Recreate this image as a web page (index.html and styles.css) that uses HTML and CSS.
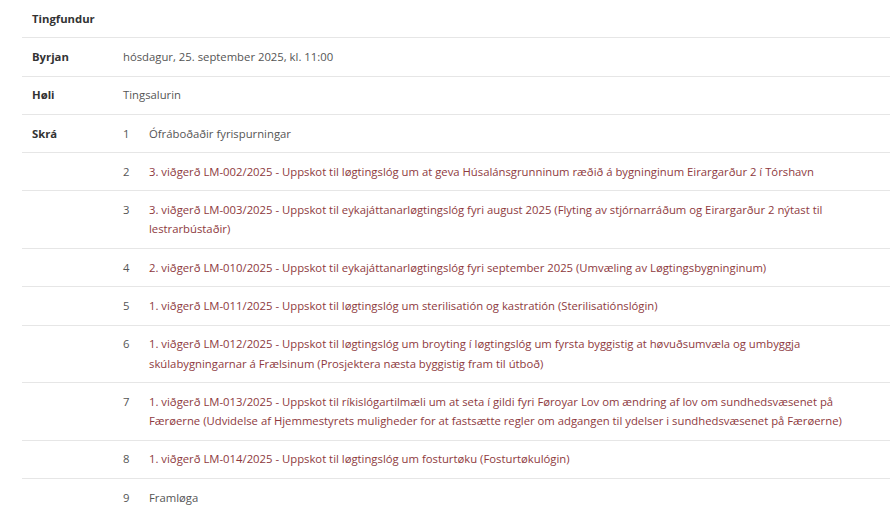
FILE: index.html
```html
<!DOCTYPE html>
<html lang="fo">
<head>
<meta charset="utf-8">
<link rel="stylesheet" href="styles.css">
</head>
<body>
<table class="meeting">
  <tbody>
    <tr class="first">
      <th>Tingfundur</th>
      <td></td>
    </tr>
    <tr>
      <th>Byrjan</th>
      <td>hósdagur, 25. september 2025, kl. 11:00</td>
    </tr>
    <tr>
      <th>Høli</th>
      <td>Tingsalurin</td>
    </tr>
    <tr>
      <th>Skrá</th>
      <td><div class="item"><span class="num">1</span><span class="txt">Ófráboðaðir fyrispurningar</span></div></td>
    </tr>
    <tr>
      <th></th>
      <td><div class="item"><span class="num">2</span><a class="txt link" href="#">3. viðgerð LM-002/2025 - Uppskot til løgtingslóg um at geva Húsalánsgrunninum ræðið á bygninginum Eirargarður 2 í Tórshavn</a></div></td>
    </tr>
    <tr>
      <th></th>
      <td><div class="item"><span class="num">3</span><a class="txt link" href="#">3. viðgerð LM-003/2025 - Uppskot til eykajáttanarløgtingslóg fyri august 2025 (Flyting av stjórnarráðum og Eirargarður 2 nýtast til lestrarbústaðir)</a></div></td>
    </tr>
    <tr>
      <th></th>
      <td><div class="item"><span class="num">4</span><a class="txt link" href="#">2. viðgerð LM-010/2025 - Uppskot til eykajáttanarløgtingslóg fyri september 2025 (Umvæling av Løgtingsbygninginum)</a></div></td>
    </tr>
    <tr>
      <th></th>
      <td><div class="item"><span class="num">5</span><a class="txt link" href="#">1. viðgerð LM-011/2025 - Uppskot til løgtingslóg um sterilisatión og kastratión (Sterilisatiónslógin)</a></div></td>
    </tr>
    <tr>
      <th></th>
      <td><div class="item"><span class="num">6</span><a class="txt link" href="#">1. viðgerð LM-012/2025 - Uppskot til løgtingslóg um broyting í løgtingslóg um fyrsta byggistig at høvuðsumvæla og umbyggja skúlabygningarnar á Frælsinum (Prosjektera næsta byggistig fram til útboð)</a></div></td>
    </tr>
    <tr>
      <th></th>
      <td><div class="item"><span class="num">7</span><a class="txt link" href="#">1. viðgerð LM-013/2025 - Uppskot til ríkislógartilmæli um at seta í gildi fyri Føroyar Lov om ændring af lov om sundhedsvæsenet på Færøerne (Udvidelse af Hjemmestyrets muligheder for at fastsætte regler om adgangen til ydelser i sundhedsvæsenet på Færøerne)</a></div></td>
    </tr>
    <tr>
      <th></th>
      <td><div class="item"><span class="num">8</span><a class="txt link" href="#">1. viðgerð LM-014/2025 - Uppskot til løgtingslóg um fosturtøku (Fosturtøkulógin)</a></div></td>
    </tr>
    <tr>
      <th></th>
      <td><div class="item"><span class="num">9</span><span class="txt">Framløga</span></div></td>
    </tr>
  </tbody>
</table>
</body>
</html>
```
FILE: styles.css
```css
html, body {
  margin: 0;
  padding: 0;
  background: #fff;
}
body {
  padding-left: 22px;
  font-family: "Open Sans", "Liberation Sans", sans-serif;
  font-size: 11.3px;
  line-height: 19.2px;
  color: #555;
}
.meeting {
  width: 100%;
  border-collapse: collapse;
}
.meeting th,
.meeting td {
  padding: 8.8px 10px 9.3px;
  vertical-align: top;
  text-align: left;
  border-top: 1px solid #e6e6e6;
}
.meeting tr.first th,
.meeting tr.first td {
  border-top: none;
}
.meeting th {
  width: 81px;
  font-weight: 700;
  color: #333;
}
.meeting td {
  padding-left: 0;
}
.item {
  display: flex;
}
.num {
  flex: 0 0 26px;
}
.txt {
  flex: 1;
}
.link {
  color: #8e3a3e;
  text-decoration: none;
}
```
